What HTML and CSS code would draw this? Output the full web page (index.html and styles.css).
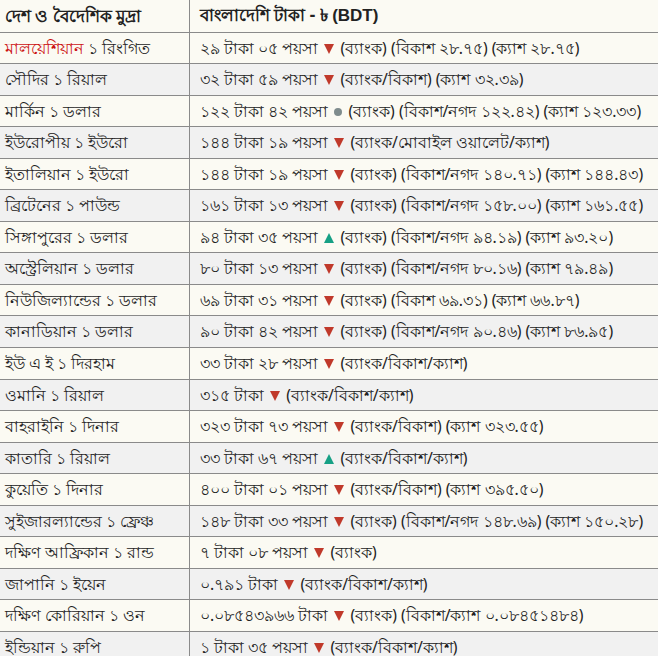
FILE: index.html
```html
<!DOCTYPE html>
<html lang="bn">
<head>
<meta charset="utf-8">
<link rel="stylesheet" href="styles.css">
</head>
<body>
<table class="rates">
<thead>
<tr><th class="c1">দেশ ও বৈদেশিক মুদ্রা</th><th class="c2">বাংলাদেশি টাকা - ৳ <span class="lat">(BDT)</span></th></tr>
</thead>
<tbody>
<tr><td><span class="hl">মালয়েশিয়ান</span> ১ রিংগিত</td><td>২৯ টাকা ০৫ পয়সা <span class="dn"></span> (ব্যাংক) (বিকাশ ২৮.৭৫) (ক্যাশ ২৮.৭৫)</td></tr>
<tr><td>সৌদির ১ রিয়াল</td><td>৩২ টাকা ৫৯ পয়সা <span class="dn"></span> (ব্যাংক/বিকাশ) (ক্যাশ ৩২.৩৯)</td></tr>
<tr><td>মার্কিন ১ ডলার</td><td>১২২ টাকা ৪২ পয়সা <span class="eq"></span> (ব্যাংক) (বিকাশ/নগদ ১২২.৪২) (ক্যাশ ১২৩.৩৩)</td></tr>
<tr><td>ইউরোপীয় ১ ইউরো</td><td>১৪৪ টাকা ১৯ পয়সা <span class="dn"></span> (ব্যাংক/মোবাইল ওয়ালেট/ক্যাশ)</td></tr>
<tr><td>ইতালিয়ান ১ ইউরো</td><td>১৪৪ টাকা ১৯ পয়সা <span class="dn"></span> (ব্যাংক) (বিকাশ/নগদ ১৪০.৭১) (ক্যাশ ১৪৪.৪৩)</td></tr>
<tr><td>ব্রিটেনের ১ পাউন্ড</td><td>১৬১ টাকা ১৩ পয়সা <span class="dn"></span> (ব্যাংক) (বিকাশ/নগদ ১৫৮.০০) (ক্যাশ ১৬১.৫৫)</td></tr>
<tr><td>সিঙ্গাপুরের ১ ডলার</td><td>৯৪ টাকা ৩৫ পয়সা <span class="up"></span> (ব্যাংক) (বিকাশ/নগদ ৯৪.১৯) (ক্যাশ ৯৩.২০)</td></tr>
<tr><td>অস্ট্রেলিয়ান ১ ডলার</td><td>৮০ টাকা ১৩ পয়সা <span class="dn"></span> (ব্যাংক) (বিকাশ/নগদ ৮০.১৬) (ক্যাশ ৭৯.৪৯)</td></tr>
<tr><td>নিউজিল্যান্ডের ১ ডলার</td><td>৬৯ টাকা ৩১ পয়সা <span class="dn"></span> (ব্যাংক) (বিকাশ ৬৯.৩১) (ক্যাশ ৬৬.৮৭)</td></tr>
<tr><td>কানাডিয়ান ১ ডলার</td><td>৯০ টাকা ৪২ পয়সা <span class="dn"></span> (ব্যাংক) (বিকাশ/নগদ ৯০.৪৬) (ক্যাশ ৮৬.৯৫)</td></tr>
<tr><td>ইউ এ ই ১ দিরহাম</td><td>৩৩ টাকা ২৮ পয়সা <span class="dn"></span> (ব্যাংক/বিকাশ/ক্যাশ)</td></tr>
<tr><td>ওমানি ১ রিয়াল</td><td>৩১৫ টাকা <span class="dn"></span> (ব্যাংক/বিকাশ/ক্যাশ)</td></tr>
<tr><td>বাহরাইনি ১ দিনার</td><td>৩২৩ টাকা ৭৩ পয়সা <span class="dn"></span> (ব্যাংক/বিকাশ) (ক্যাশ ৩২৩.৫৫)</td></tr>
<tr><td>কাতারি ১ রিয়াল</td><td>৩৩ টাকা ৬৭ পয়সা <span class="up"></span> (ব্যাংক/বিকাশ/ক্যাশ)</td></tr>
<tr><td>কুয়েতি ১ দিনার</td><td>৪০০ টাকা ০১ পয়সা <span class="dn"></span> (ব্যাংক/বিকাশ) (ক্যাশ ৩৯৫.৫০)</td></tr>
<tr><td>সুইজারল্যান্ডের ১ ফ্রেঞ্চ</td><td>১৪৮ টাকা ৩৩ পয়সা <span class="dn"></span> (ব্যাংক) (বিকাশ/নগদ ১৪৮.৬৯) (ক্যাশ ১৫০.২৮)</td></tr>
<tr><td>দক্ষিণ আফ্রিকান ১ রান্ড</td><td>৭ টাকা ০৮ পয়সা <span class="dn"></span> (ব্যাংক)</td></tr>
<tr><td>জাপানি ১ ইয়েন</td><td>০.৭৯১ টাকা <span class="dn"></span> (ব্যাংক/বিকাশ/ক্যাশ)</td></tr>
<tr><td>দক্ষিণ কোরিয়ান ১ ওন</td><td>০.০৮৫৪৩৯৬৬ টাকা <span class="dn"></span> (ব্যাংক) (বিকাশ/ক্যাশ ০.০৮৪৫১৪৮৪)</td></tr>
<tr><td>ইন্ডিয়ান ১ রুপি</td><td>১ টাকা ৩৫ পয়সা <span class="dn"></span> (ব্যাংক/বিকাশ/ক্যাশ)</td></tr>
</tbody>
</table>
</body>
</html>
```
FILE: styles.css
```css
html, body {
  margin: 0;
  padding: 0;
  background: #fbfaf3;
}
body {
  font-family: "Noto Sans", "Liberation Sans", sans-serif;
  font-size: 15.7px;
  color: #222;
  overflow: hidden;
}
.rates {
  border-collapse: collapse;
  margin-left: -5px;
  width: 670px;
}
.rates th, .rates td {
  text-align: left;
  padding: 5px 10px;
  line-height: 20.55px;
  border-top: 1px solid #8a8a8a;
  border-bottom: 1px solid #8a8a8a;
  white-space: nowrap;
}
.rates th {
  border-top: none;
  font-weight: bold;
  font-size: 17px;
  background: #fbfaf3;
}
.rates th + th, .rates td + td {
  border-left: 1px solid #8a8a8a;
}
.c1 { width: 174px; }
.rates tbody tr:nth-child(odd) td { background: #fbfaf3; }
.rates tbody tr:nth-child(even) td { background: #f1f1f1; }
.lat { font-family: "Liberation Sans", Arial, sans-serif; }
.hl { color: #cc1111; }
.dn, .up, .eq {
  display: inline-block;
  width: 0;
  height: 0;
  margin: 0 2px;
  vertical-align: 0;
}
.dn {
  border-left: 5px solid transparent;
  border-right: 5px solid transparent;
  border-top: 10px solid #c0392b;
}
.up {
  border-left: 5px solid transparent;
  border-right: 5px solid transparent;
  border-bottom: 10px solid #16a085;
}
.eq {
  width: 8px;
  height: 8px;
  border-radius: 50%;
  background: #7f8c8d;
  vertical-align: 1px;
}
```
